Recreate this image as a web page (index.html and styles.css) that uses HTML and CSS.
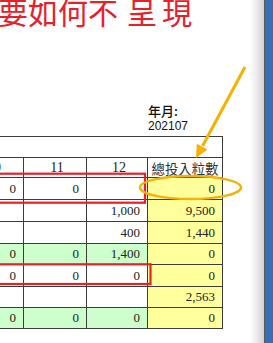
FILE: index.html
```html
<!DOCTYPE html>
<html lang="zh-Hant">
<head>
<meta charset="utf-8">
<link rel="stylesheet" href="styles.css">
</head>
<body>
<div class="page">
  <div class="sheet">
    <h1 class="title">要如何不<span class="g1">呈</span><span class="g2">現</span></h1>
    <div class="ym">
      <div class="ym-label">年月:</div>
      <div class="ym-value">202107</div>
    </div>
    <div class="grid">
      <div class="c span"></div>

      <div class="c h">10</div>
      <div class="c h">11</div>
      <div class="c h">12</div>
      <div class="c h cjk">總投入粒數</div>

      <div class="c">0</div>
      <div class="c">0</div>
      <div class="c"></div>
      <div class="c y">0</div>

      <div class="c"></div>
      <div class="c"></div>
      <div class="c">1,000</div>
      <div class="c y">9,500</div>

      <div class="c"></div>
      <div class="c"></div>
      <div class="c">400</div>
      <div class="c y">1,440</div>

      <div class="c g">0</div>
      <div class="c g">0</div>
      <div class="c g">1,400</div>
      <div class="c y">0</div>

      <div class="c">0</div>
      <div class="c">0</div>
      <div class="c">0</div>
      <div class="c y">0</div>

      <div class="c"></div>
      <div class="c"></div>
      <div class="c"></div>
      <div class="c y">2,563</div>

      <div class="c g">0</div>
      <div class="c g">0</div>
      <div class="c g">0</div>
      <div class="c y">0</div>
    </div>
    <svg class="marks" width="250" height="343" viewBox="0 0 250 343">
      <rect x="-10" y="173.7" width="155" height="29" fill="none" stroke="#e8202a" stroke-width="2.2"/>
      <rect x="-10" y="264.3" width="160.5" height="19.7" fill="none" stroke="#e8202a" stroke-width="2.2"/>
      <ellipse cx="190.5" cy="187.5" rx="50.5" ry="11.5" fill="none" stroke="#f5b200" stroke-width="2.5"/>
      <line x1="245" y1="67" x2="202.5" y2="146" stroke="#f5b200" stroke-width="3"/>
      <polygon points="196,158 207.5,149.5 196.8,143.8" fill="#f5b200"/>
    </svg>
  </div>
  <div class="shadow"></div>
  <div class="bar"></div>
</div>
</body>
</html>
```

FILE: styles.css
```css
html, body {
  margin: 0;
  padding: 0;
  background: #ffffff;
}

.page {
  display: flex;
  width: 273px;
  height: 343px;
  overflow: hidden;
}

.sheet {
  position: relative;
  flex: 0 0 250px;
  height: 343px;
  overflow: hidden;
  background: #ffffff;
}

.title {
  margin: -4px 0 0 -2px;
  font-family: "Noto Sans CJK TC", "Noto Sans CJK SC", sans-serif;
  font-weight: 400;
  font-size: 30px;
  line-height: 30px;
  height: 30px;
  color: #e8202a;
  white-space: nowrap;
}

.title .g1 {
  margin-left: 9px;
}

.title .g2 {
  margin-left: 5px;
}

.ym {
  margin-top: 76px;
  padding-left: 148px;
  color: #111111;
}

.ym-label {
  font-family: "Noto Sans CJK TC", sans-serif;
  font-size: 13px;
  font-weight: 500;
  line-height: 17px;
  height: 17px;
}

.ym-value {
  font-family: "Liberation Sans", Arial, sans-serif;
  font-size: 12px;
  line-height: 15px;
  height: 15px;
}

.grid {
  margin-top: 2px;
  margin-left: -40px;
  width: 261px;
  display: grid;
  grid-template-columns: 62px 62px 60px 74px;
  grid-template-rows: 20px 19px 21px 21px 21px 20px 21px 20px 20px;
  gap: 1px;
  padding: 1px;
  background: #3c3c3c;
}

.c {
  background: #ffffff;
  display: flex;
  align-items: center;
  justify-content: flex-end;
  padding-right: 7px;
  font-family: "Liberation Serif", "Times New Roman", serif;
  font-size: 13px;
  color: #222222;
  white-space: nowrap;
}

.span {
  grid-column: 1 / 5;
}

.h {
  justify-content: center;
  padding-right: 0;
  padding-left: 4px;
  font-size: 14px;
}

.h.cjk {
  padding-left: 0;
  font-family: "Noto Sans CJK TC", sans-serif;
  font-size: 13.4px;
  color: #333333;
}

.y {
  background: #ffff9c;
}

.g {
  background: #ccffcc;
}

.marks {
  position: absolute;
  left: 0;
  top: 0;
}

.shadow {
  flex: 0 0 14px;
  background: linear-gradient(to right, #ffffff, #d2d2d2);
}

.bar {
  flex: 1 1 auto;
  background: #3a6cb4;
  border-left: 1px solid #5a5a5a;
}
```
